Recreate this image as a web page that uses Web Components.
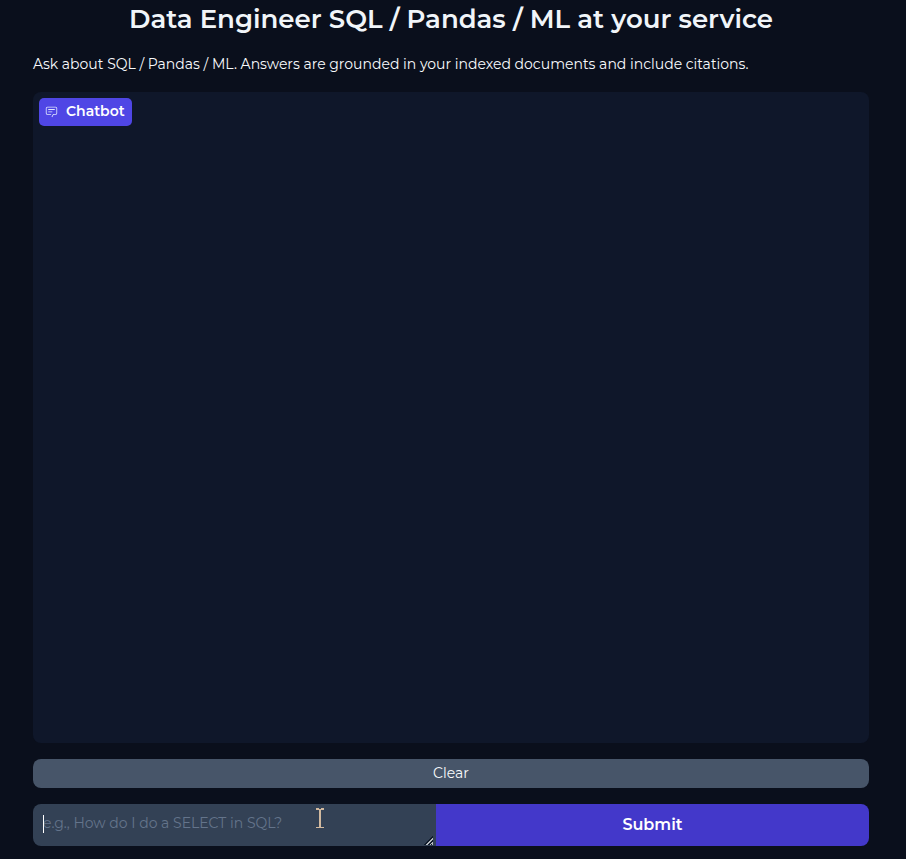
<!DOCTYPE html>
<html lang="en"><head><meta charset="utf-8"><title>Data Engineer assistant</title>
<style>body{margin:0;background:#0a0f1c;color:#f8fafc;font-family:Montserrat,Inter,sans-serif}</style></head>
<body>
<chat-app></chat-app>
<script>
const define=(name,html)=>customElements.define(name,class extends HTMLElement{
  constructor(){super();this.attachShadow({mode:'open'}).innerHTML=html;}
});
define('page-title',`<style>:host{display:block;text-align:center}h1{margin:0;font-size:26px;line-height:34px;font-weight:600;white-space:nowrap;color:#f1f5f9}</style><h1><slot></slot></h1>`);
define('page-intro',`<style>:host{display:block}p{margin:0;padding:2px 0 1px;font-size:14px;line-height:21px;white-space:nowrap}</style><p><slot></slot></p>`);
define('chat-label',`<style>:host{display:inline-flex;align-items:center;gap:8px;box-sizing:border-box;width:93px;height:28px;padding:0 6px 2px;border-radius:5px;background:#4f46e5;font-size:14px;font-weight:600;color:#fff;white-space:nowrap}svg{width:13px;height:13px;flex:none}</style>
<svg viewBox="0 0 32 32" fill="#e0e7ff"><path d="M17.74 30 16 29l4-7h6a2 2 0 0 0 2-2V8a2 2 0 0 0-2-2H6a2 2 0 0 0-2 2v12a2 2 0 0 0 2 2h9v2H6a4 4 0 0 1-4-4V8a4 4 0 0 1 4-4h20a4 4 0 0 1 4 4v12a4 4 0 0 1-4 4h-4.84Z"/><path d="M8 10h16v2H8zM8 16h10v2H8z"/></svg><span><slot></slot></span>`);
define('chat-panel',`<style>:host{display:flex;align-items:flex-start;box-sizing:border-box;height:651px;padding:6px;border-radius:8px;background:#0f172a}</style><slot></slot>`);
define('clear-button',`<style>:host{display:block}button{display:block;width:100%;height:29px;padding:0;border:0;border-radius:8px;background:#475569;color:#f8fafc;font:400 14px/29px Montserrat,Inter,sans-serif}</style><button><slot></slot></button>`);
define('submit-button',`<style>:host{display:block;flex:1}button{display:block;width:100%;height:42px;padding:0;border:0;border-radius:0 8px 8px 0;background:#4338ca;color:#fff;font:600 16px/42px Montserrat,Inter,sans-serif}</style><button><slot></slot></button>`);
define('question-field',`<style>:host{display:block;position:relative;box-sizing:border-box;width:403px;height:42px;padding:9px 10px;border-radius:8px 0 0 8px;background:#334155;color:#64748b;font-size:14px;line-height:21px;white-space:nowrap}
.caret{position:absolute;left:10px;top:11px;width:1px;height:18px;background:#fff}
.grip{position:absolute;right:2px;bottom:1px}.pointer{position:absolute;left:283px;top:4px}</style>
<slot></slot><span class="caret"></span>
<svg class="pointer" width="8" height="20" viewBox="0 0 8 20" shape-rendering="crispEdges" fill="#d2b99f"><path d="M0 0h3v1h2V0h3v2H5v17h3v1H0v-1h3V2H0z"/></svg>
<svg class="grip" width="10" height="9" viewBox="0 0 10 9" shape-rendering="crispEdges"><path d="M0 8h1V7h1V6h1V5h1V4h1V3h1V2h1V1h1V0h1v9H0z" fill="#111c2c"/><path d="M2 9V8h1V7h1V6h1V5h1V4h1V3h1V2h1v2H8v1H7v1H6v1H5v1H4v1zM6 9V8h1V7h1V6h1v3H8V8H7v1z" fill="#b8bcc1"/></svg>`);
define('chat-app',`<style>:host{display:flex;flex-direction:column;gap:16px;padding:2px 37px 0 33px}.row{display:flex}</style>
<page-title>Data Engineer SQL / Pandas / ML at your service</page-title>
<page-intro>Ask about SQL / Pandas / ML. Answers are grounded in your indexed documents and include citations.</page-intro>
<chat-panel><chat-label>Chatbot</chat-label></chat-panel>
<clear-button>Clear</clear-button>
<div class="row"><question-field>e.g., How do I do a SELECT in SQL?</question-field><submit-button>Submit</submit-button></div>`);
</script></body></html>
